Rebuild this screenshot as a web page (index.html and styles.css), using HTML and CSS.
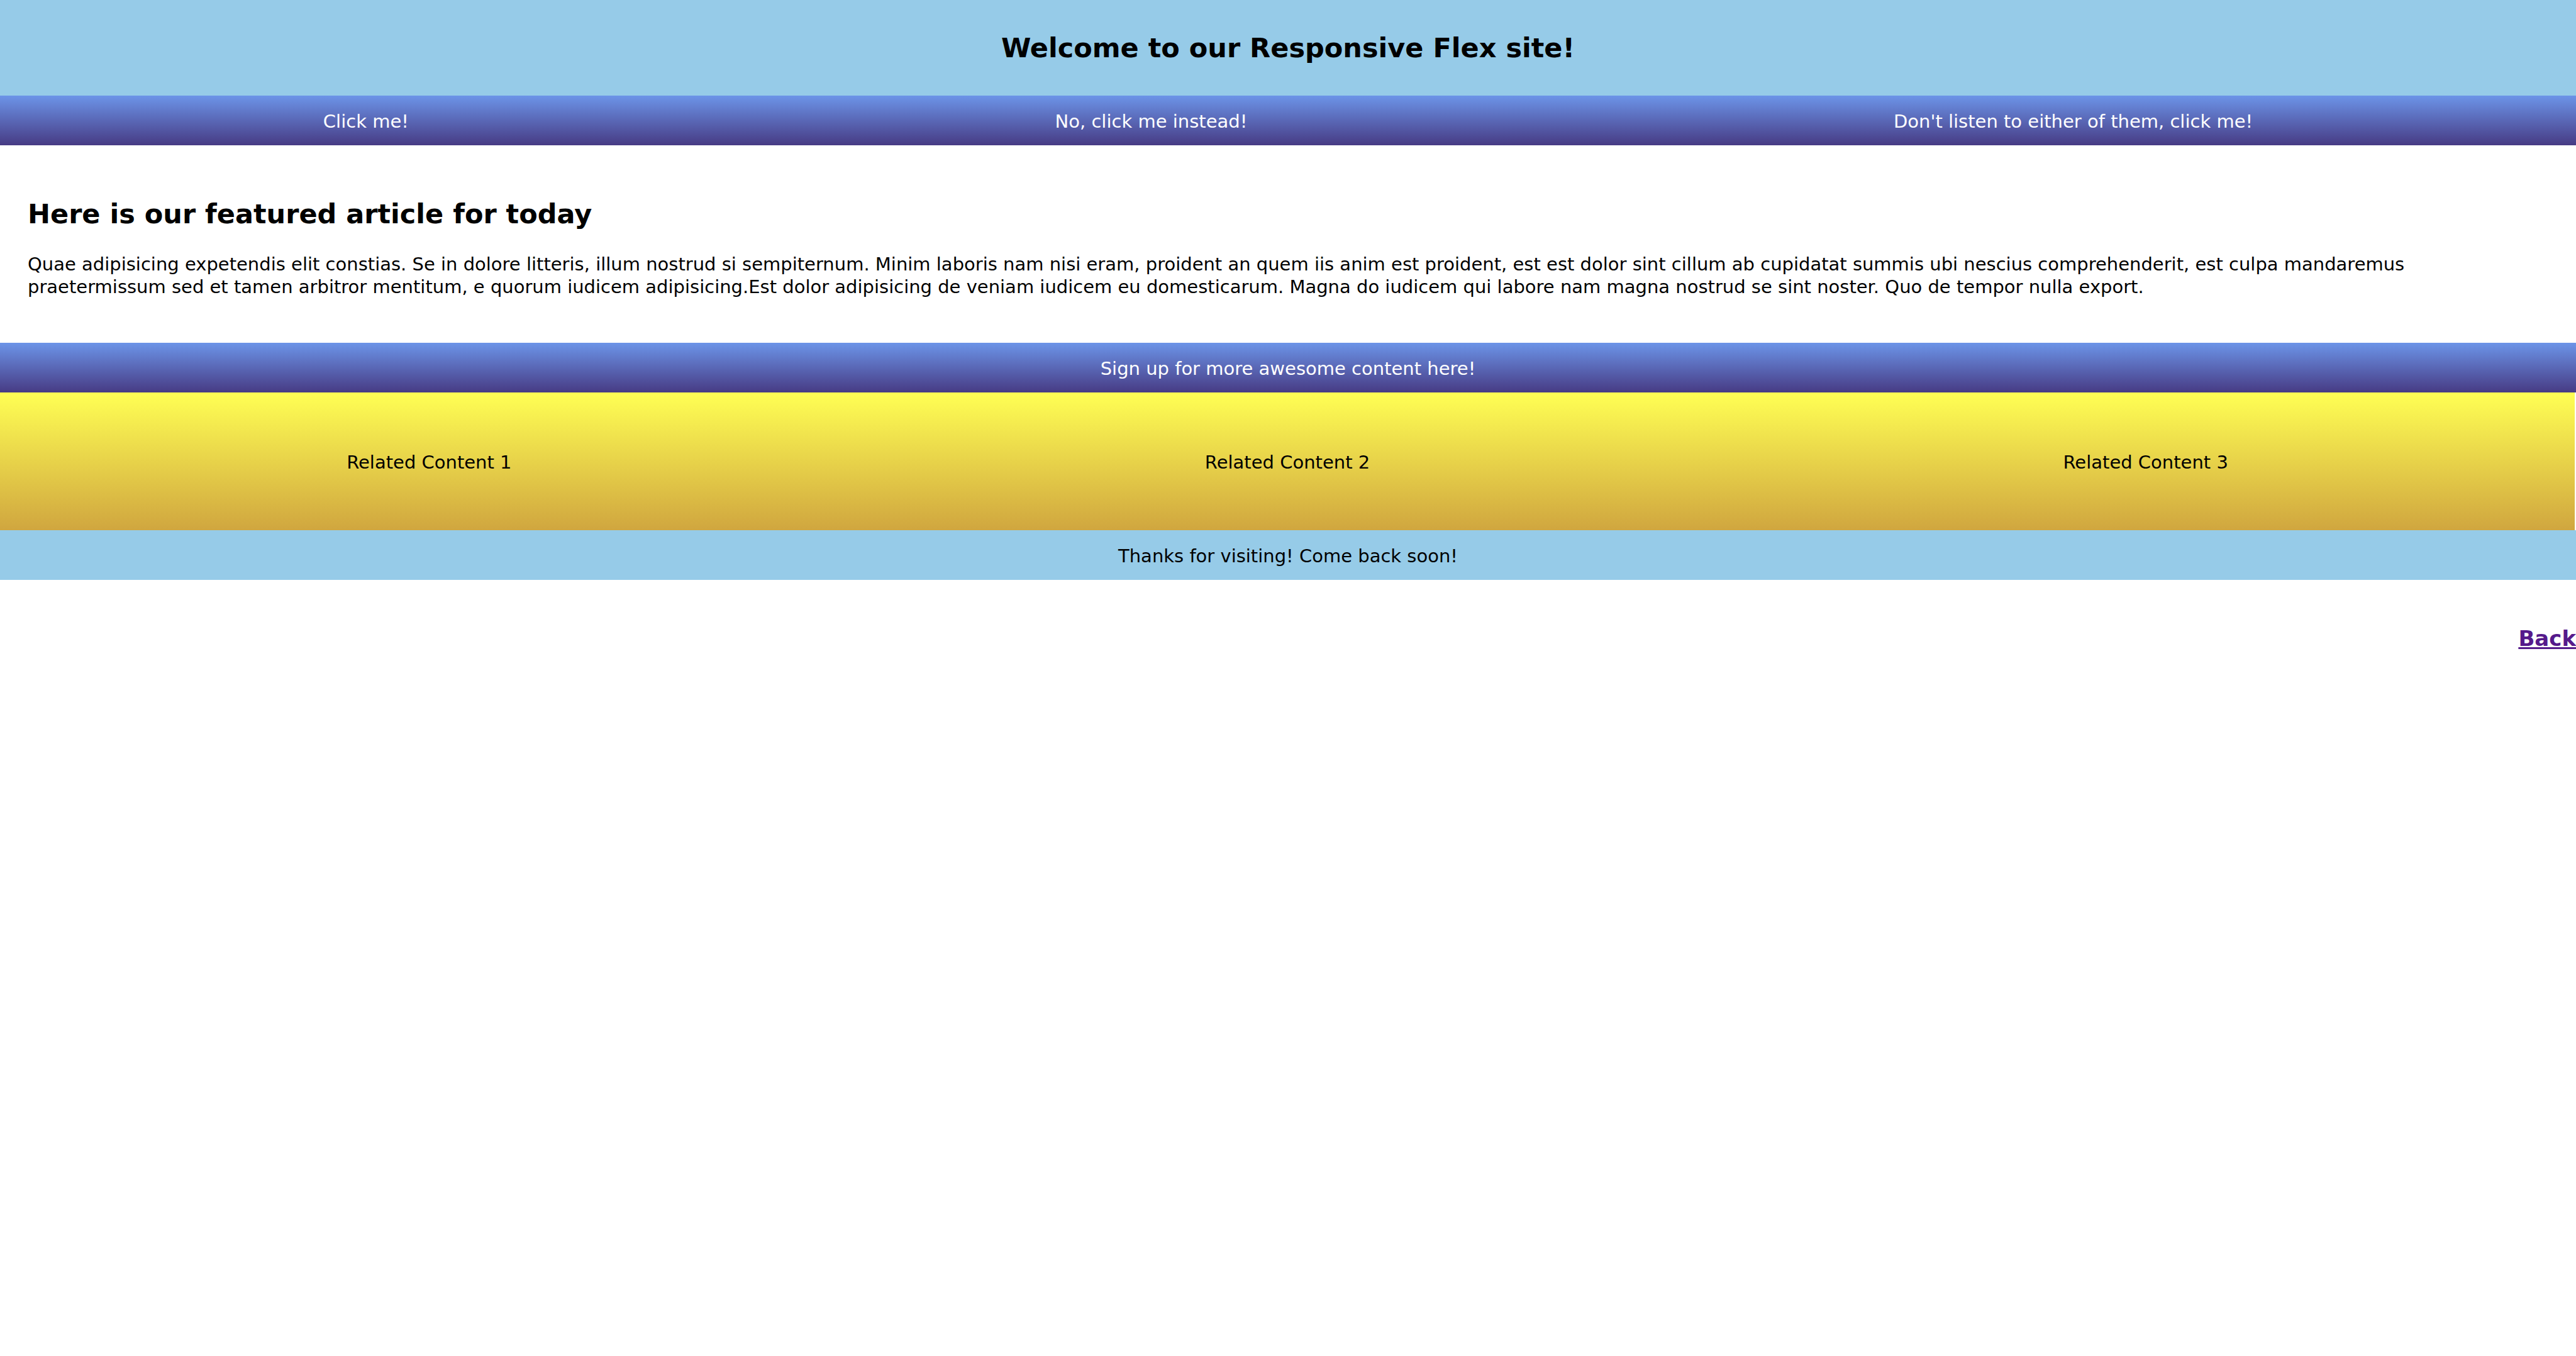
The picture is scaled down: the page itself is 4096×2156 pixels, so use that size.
FILE: index.html
```html
<!DOCTYPE html>
<html lang="en">
<head>
<meta charset="utf-8">
<title>Responsive Flex</title>
<link rel="stylesheet" href="styles.css">
</head>
<body>
<header class="header"><h1 class="title">Welcome to our Responsive Flex site!</h1></header>
<nav class="bar nav">
  <a class="bar-link" href="#">Click me!</a>
  <a class="bar-link" href="#">No, click me instead!</a>
  <a class="bar-link" href="#">Don't listen to either of them, click me!</a>
</nav>
<main class="article">
  <h2 class="title">Here is our featured article for today</h2>
  <p class="copy">Quae adipisicing expetendis elit constias. Se in dolore litteris, illum nostrud si sempiternum. Minim laboris nam nisi eram, proident an quem iis anim est proident, est est dolor sint cillum ab cupidatat summis ubi nescius comprehenderit, est culpa mandaremus praetermissum sed et tamen arbitror mentitum, e quorum iudicem adipisicing.Est dolor adipisicing de veniam iudicem eu domesticarum. Magna do iudicem qui labore nam magna nostrud se sint noster. Quo de tempor nulla export.</p>
</main>
<section class="bar signup"><a class="bar-link" href="#">Sign up for more awesome content here!</a></section>
<section class="related">
  <div class="related-item">Related Content 1</div>
  <div class="related-item">Related Content 2</div>
  <div class="related-item">Related Content 3</div>
</section>
<footer class="footer">Thanks for visiting! Come back soon!</footer>
<h3 class="back"><a class="back-link" href="#">Back</a></h3>
</body>
</html>
```
FILE: styles.css
```css
body {
  margin: 0;
  background: #fff;
  color: #000;
  font-family: Verdana, "DejaVu Sans", sans-serif;
  font-size: 29px;
  line-height: 35px;
}

.header {
  padding: 49px 0;
  background: #96cbe8;
  text-align: center;
}

.title {
  margin: 0;
  font-size: 43px;
  line-height: 54px;
}

.bar {
  display: flex;
  padding: 24px 0 20px;
  background: linear-gradient(#6c94e8, #473b84);
}

.nav {
  justify-content: space-around;
}

.signup {
  justify-content: center;
}

.bar-link {
  color: #fff;
  text-decoration: none;
}

.article {
  padding: 82px 44px 71px;
}

.copy {
  margin: 35px 0 0;
  line-height: 36px;
}

.related {
  display: flex;
  margin-right: 2px;
  background: linear-gradient(#ffff54, #d0a63f);
}

.related-item {
  flex: 1;
  padding: 94px 0 90px;
  text-align: center;
}

.footer {
  padding: 24px 0 20px;
  background: #96cbe8;
  text-align: center;
}

.back {
  margin: 72px 0 0;
  font-size: 34px;
  line-height: 42px;
  text-align: right;
}

.back-link {
  color: #551a8b;
}
```
